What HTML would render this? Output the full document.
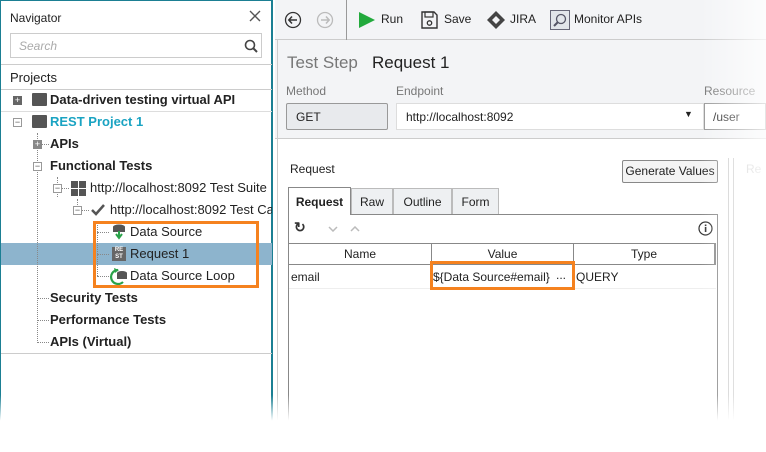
<!DOCTYPE html>
<html><head><meta charset="utf-8"><style>
*{box-sizing:border-box;margin:0;padding:0}
body{width:766px;height:452px;overflow:hidden;background:#fff;font-family:"Liberation Sans",sans-serif;font-size:12px;color:#222;position:relative}
.a{position:absolute}
.nav{left:0;top:0;width:273px;height:452px;background:#fff;border-left:1px solid #1b7f93;border-right:2px solid #1b7f93;border-top:1px solid #1b7f93}
.row{position:absolute;left:0;width:271px;height:22px;line-height:22px;font-size:13px;color:#222}
.dot{position:absolute;border-left:1px dotted #888}
.doth{position:absolute;border-top:1px dotted #888}
.pm{position:absolute;width:9px;height:9px;border:1px solid #999;background:#fff;font-size:9px;line-height:7px;text-align:center;color:#555}
.fold{position:absolute;width:15px;height:13px;background:#555;border-radius:1px}
.th{position:absolute;top:0;height:21px;line-height:21px;text-align:center;font-size:12px;border-right:1px solid #888}
</style></head><body>
<div class="a nav">
<div class="a" style="left:9px;top:10px;font-size:12px">Navigator</div>
<svg class="a" style="left:248px;top:9px" width="12" height="12"><path d="M1 1L11 11M11 1L1 11" stroke="#555" stroke-width="1.4"/></svg>
<div class="a" style="left:9px;top:32px;width:252px;height:25px;border:1px solid #ccc;background:#fff"><span class="a" style="left:8px;top:5px;color:#aaa;font-style:italic;font-size:12px">Search</span>
<svg class="a" style="left:233px;top:5px" width="14" height="14"><circle cx="6" cy="6" r="4.5" fill="none" stroke="#444" stroke-width="1.6"/><path d="M9.5 9.5L13 13" stroke="#444" stroke-width="2"/></svg></div>
<div class="a" style="left:0;top:63px;width:271px;border-top:1px solid #ccc"></div>
<div class="a" style="left:9px;top:69px;font-size:13px">Projects</div>
<div class="a" style="left:0;top:88px;width:271px;border-top:1px solid #ccc"></div>
<div class="a" style="left:0;top:110px;width:271px;border-top:1px solid #ddd"></div>
<div class="a" style="left:0;top:242px;width:271px;height:22px;background:#8db4cd"></div>
<div class="a" style="left:0;top:352px;width:271px;border-top:1px solid #ccc"></div>
<div class="dot" style="left:36px;top:132px;height:210px"></div>
<div class="dot" style="left:56px;top:176px;height:20px"></div>
<div class="dot" style="left:76px;top:198px;height:10px"></div>
<div class="dot" style="left:96px;top:220px;height:55px"></div>
<div class="doth" style="left:36px;top:297px;width:12px"></div>
<div class="doth" style="left:36px;top:319px;width:12px"></div>
<div class="doth" style="left:36px;top:341px;width:12px"></div>
<div class="doth" style="left:96px;top:231px;width:12px"></div>
<div class="doth" style="left:96px;top:253px;width:12px"></div>
<div class="doth" style="left:96px;top:275px;width:12px"></div>
<div class="doth" style="left:40px;top:143px;width:8px"></div>
<div class="doth" style="left:60px;top:187px;width:8px"></div>
<div class="doth" style="left:80px;top:209px;width:8px"></div>
<div class="pm" style="left:12px;top:95px;background:#666;border-color:#666;color:#fff">+</div>
<div class="fold" style="left:31px;top:92px"></div>
<div class="row" style="left:49px;top:88px;font-weight:bold;width:220px">Data-driven testing virtual API</div>
<div class="pm" style="left:12px;top:117px">−</div>
<div class="fold" style="left:31px;top:114px"></div>
<div class="row" style="left:49px;top:110px;color:#1aa3c2;font-weight:bold;width:200px">REST Project 1</div>
<div class="pm" style="left:32px;top:139px;background:#888;border-color:#888;color:#fff">+</div>
<div class="row" style="left:49px;top:132px;font-weight:bold">APIs</div>
<div class="pm" style="left:32px;top:161px">−</div>
<div class="row" style="left:49px;top:154px;font-weight:bold">Functional Tests</div>
<div class="pm" style="left:52px;top:183px">−</div>
<svg class="a" style="left:70px;top:180px" width="15" height="15"><rect x="0" y="0" width="7" height="7" fill="#555"/><rect x="8" y="0" width="7" height="7" fill="#555"/><rect x="0" y="8" width="7" height="7" fill="#555"/><rect x="8" y="8" width="7" height="7" fill="#555"/></svg>
<div class="row" style="left:89px;top:176px;width:182px;white-space:nowrap;overflow:hidden">http://localhost:8092 Test Suite</div>
<div class="pm" style="left:72px;top:205px">−</div>
<svg class="a" style="left:90px;top:203px" width="14" height="12"><path d="M1 6l4 4L13 1" stroke="#555" stroke-width="2.5" fill="none"/></svg>
<div class="row" style="left:109px;top:198px;width:162px;white-space:nowrap;overflow:hidden">http://localhost:8092 Test Case</div>
<svg class="a" style="left:111px;top:223px" width="14" height="16"><ellipse cx="7" cy="3" rx="6" ry="2.5" fill="#555"/><rect x="1" y="3" width="12" height="5" fill="#555"/><path d="M7 7v6M4 10l3 4 3-4" stroke="#2aa34a" stroke-width="2" fill="none"/></svg>
<div class="row" style="left:129px;top:220px">Data Source</div>
<div class="a" style="left:111px;top:246px;width:14px;height:14px;background:#666;color:#fff;font-size:6px;line-height:7px;text-align:center;font-weight:bold">RE<br>ST</div>
<div class="row" style="left:129px;top:242px">Request 1</div>
<svg class="a" style="left:108px;top:266px" width="20" height="18"><path d="M9 3A7 7 0 1 0 14 15" stroke="#2aa34a" stroke-width="2.2" fill="none"/><path d="M5 1l5 2-4 3z" fill="#2aa34a"/><ellipse cx="13" cy="6" rx="5" ry="2" fill="#555"/><rect x="8" y="6" width="10" height="6" fill="#555"/></svg>
<div class="row" style="left:129px;top:264px">Data Source Loop</div>
<div class="row" style="left:49px;top:286px;font-weight:bold">Security Tests</div>
<div class="row" style="left:49px;top:308px;font-weight:bold">Performance Tests</div>
<div class="row" style="left:49px;top:330px;font-weight:bold">APIs (Virtual)</div>
<div class="a" style="left:92px;top:220px;width:166px;height:67px;border:3px solid #f5821f"></div>
</div>
<div class="a" style="left:275px;top:0;width:491px;height:452px;background:#fff"></div>
<div class="a" style="left:275px;top:0;width:491px;height:139px;background:#f3f4f6;border-bottom:1px solid #ccc"></div>
<div class="a" style="left:275px;top:39px;width:491px;border-top:1px solid #ccc"></div>
<div class="a" style="left:346px;top:0;height:40px;border-left:1px solid #999"></div>
<div class="a" style="left:277px;top:40px;height:380px;border-left:1px solid #ccc"></div>
<svg class="a" style="left:284px;top:11px" width="18" height="18"><circle cx="9" cy="9" r="7.5" fill="none" stroke="#333" stroke-width="1.3"/><path d="M13 9H5M8 5.5L4.8 9 8 12.5" stroke="#333" stroke-width="1.5" fill="none"/></svg>
<svg class="a" style="left:316px;top:11px" width="18" height="18"><circle cx="9" cy="9" r="7.5" fill="none" stroke="#bbb" stroke-width="1.3"/><path d="M5 9h8M10 5.5L13.2 9 10 12.5" stroke="#bbb" stroke-width="1.5" fill="none"/></svg>
<svg class="a" style="left:358px;top:11px" width="18" height="18"><path d="M1 1L17 9 1 17z" fill="#22aa3c"/></svg>
<div class="a" style="left:381px;top:12px;font-size:12px">Run</div>
<svg class="a" style="left:421px;top:11px" width="17" height="18"><path d="M1 1h12l3 3v13H1z" fill="none" stroke="#333" stroke-width="1.4"/><rect x="4" y="1" width="8" height="5" fill="none" stroke="#333" stroke-width="1.2"/><circle cx="8.5" cy="12" r="2.2" fill="none" stroke="#333" stroke-width="1.3"/></svg>
<div class="a" style="left:444px;top:12px">Save</div>
<svg class="a" style="left:486px;top:10px" width="20" height="20"><path d="M10 1l9 9-9 9-9-9z" fill="#444"/><path d="M10 6l4 4-4 4-4-4z" fill="#f3f4f6"/></svg>
<div class="a" style="left:510px;top:12px">JIRA</div>
<svg class="a" style="left:550px;top:10px" width="20" height="20"><rect x="0.5" y="0.5" width="19" height="19" fill="#e2e5ea" stroke="#667"/><circle cx="11" cy="9" r="4.5" fill="none" stroke="#556" stroke-width="1.3"/><path d="M8 12l-4 4" stroke="#556" stroke-width="2"/></svg>
<div class="a" style="left:574px;top:12px">Monitor APIs</div>
<div class="a" style="left:287px;top:53px;font-size:17px;color:#777">Test Step</div>
<div class="a" style="left:372px;top:53px;font-size:17px;color:#222">Request 1</div>
<div class="a" style="left:286px;top:84px;font-size:12px;color:#777">Method</div>
<div class="a" style="left:396px;top:84px;font-size:12px;color:#777">Endpoint</div>
<div class="a" style="left:704px;top:84px;font-size:12px;color:#777">Resource</div>
<div class="a" style="left:286px;top:103px;width:102px;height:27px;border:1px solid #999;border-radius:2px;background:#e8eaed;padding:6px 9px">GET</div>
<div class="a" style="left:396px;top:103px;width:308px;height:27px;background:#fff;border:1px solid #ddd;padding:6px 9px">http://localhost:8092<span class="a" style="left:287px;top:5px;font-size:9px">▼</span></div>
<div class="a" style="left:704px;top:103px;width:62px;height:27px;background:#fff;border:1px solid #999;padding:6px 8px">/user</div>
<div class="a" style="left:290px;top:162px">Request</div>
<div class="a" style="left:622px;top:160px;width:96px;height:23px;border:1px solid #888;border-radius:2px;background:#f4f4f4;text-align:center;line-height:21px">Generate Values</div>
<div class="a" style="left:728px;top:158px;height:262px;border-left:1px solid #ccc"></div>
<div class="a" style="left:733px;top:158px;height:262px;border-left:1px solid #ccc"></div>
<div class="a" style="left:746px;top:162px;color:#ccc">Re</div>
<div class="a" style="left:288px;top:214px;width:430px;height:210px;border:1px solid #888;background:#fff"></div>
<div class="a" style="left:288px;top:187px;width:63px;height:28px;border:1px solid #888;border-bottom:none;background:#fff;text-align:center;line-height:28px;font-weight:bold;font-size:12px;color:#222">Request</div>
<div class="a" style="left:351px;top:188px;width:42px;height:26px;border:1px solid #bbb;border-bottom:none;background:#eef0f2;text-align:center;line-height:26px">Raw</div>
<div class="a" style="left:393px;top:188px;width:59px;height:26px;border:1px solid #bbb;border-bottom:none;background:#eef0f2;text-align:center;line-height:26px">Outline</div>
<div class="a" style="left:452px;top:188px;width:47px;height:26px;border:1px solid #bbb;border-bottom:none;background:#eef0f2;text-align:center;line-height:26px">Form</div>
<div class="a" style="left:294px;top:219px;font-size:14px;font-weight:bold;color:#333">↻</div>
<svg class="a" style="left:328px;top:226px" width="10" height="6"><path d="M1 1l4 4 4-4" stroke="#bbb" stroke-width="1.5" fill="none"/></svg>
<svg class="a" style="left:350px;top:226px" width="10" height="6"><path d="M1 5l4-4 4 4" stroke="#bbb" stroke-width="1.5" fill="none"/></svg>
<svg class="a" style="left:698px;top:221px" width="15" height="15"><circle cx="7.5" cy="7.5" r="6.5" fill="none" stroke="#333" stroke-width="1.2"/><rect x="6.8" y="6" width="1.6" height="5" fill="#333"/><rect x="6.8" y="3.5" width="1.6" height="1.6" fill="#333"/></svg>
<div class="a" style="left:289px;top:243px;width:427px;height:22px;border-top:1px solid #888;border-bottom:1px solid #888">
<div class="th" style="left:0;width:143px">Name</div><div class="th" style="left:143px;width:142px">Value</div><div class="th" style="left:285px;width:142px;border-right:2px solid #888">Type</div></div>
<div class="a" style="left:289px;top:288px;width:427px;border-top:1px solid #eee"></div>
<div class="a" style="left:291px;top:270px">email</div>
<div class="a" style="left:433px;top:270px">${Data Source#email}</div>
<div class="a" style="left:556px;top:268px">...</div>
<div class="a" style="left:576px;top:270px">QUERY</div>
<div class="a" style="left:430px;top:261px;width:145px;height:29px;border:3px solid #f5821f"></div>
<div class="a" style="left:0;top:395px;width:766px;height:57px;background:linear-gradient(rgba(255,255,255,0),#fff 45%)"></div>
<div class="a" style="left:700px;top:0;width:66px;height:452px;background:linear-gradient(90deg,rgba(255,255,255,0),rgba(255,255,255,.75))"></div>
</body></html>
